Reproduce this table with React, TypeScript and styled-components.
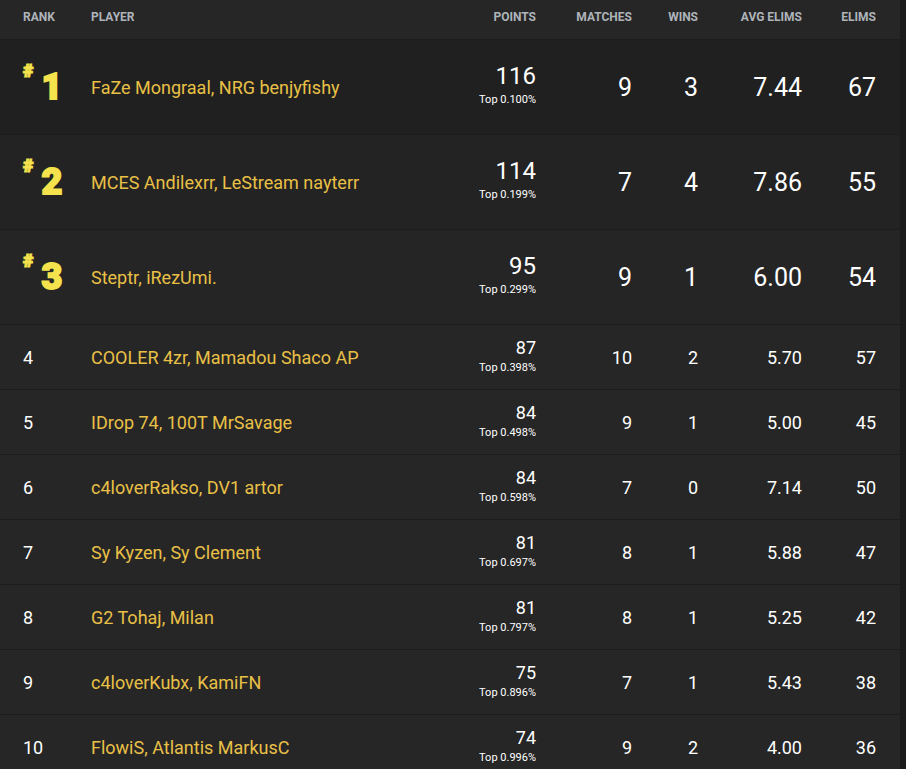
import styled, { createGlobalStyle } from 'styled-components';

const GlobalStyle = createGlobalStyle`
  html, body { margin: 0; padding: 0; background: #1b1b1b; }
  body { font-family: Roboto, "Noto Sans", "Liberation Sans", sans-serif; }
`;

type Row = {
  rank: number;
  player: string;
  points: number;
  top: string;
  matches: number;
  wins: number;
  avg: string;
  elims: number;
};

const rows: Row[] = [
  { rank: 1, player: 'FaZe Mongraal, NRG benjyfishy', points: 116, top: '0.100', matches: 9, wins: 3, avg: '7.44', elims: 67 },
  { rank: 2, player: 'MCES Andilexrr, LeStream nayterr', points: 114, top: '0.199', matches: 7, wins: 4, avg: '7.86', elims: 55 },
  { rank: 3, player: 'Steptr, iRezUmi.', points: 95, top: '0.299', matches: 9, wins: 1, avg: '6.00', elims: 54 },
  { rank: 4, player: 'COOLER 4zr, Mamadou Shaco AP', points: 87, top: '0.398', matches: 10, wins: 2, avg: '5.70', elims: 57 },
  { rank: 5, player: 'IDrop 74, 100T MrSavage', points: 84, top: '0.498', matches: 9, wins: 1, avg: '5.00', elims: 45 },
  { rank: 6, player: 'c4loverRakso, DV1 artor', points: 84, top: '0.598', matches: 7, wins: 0, avg: '7.14', elims: 50 },
  { rank: 7, player: 'Sy Kyzen, Sy Clement', points: 81, top: '0.697', matches: 8, wins: 1, avg: '5.88', elims: 47 },
  { rank: 8, player: 'G2 Tohaj, Milan', points: 81, top: '0.797', matches: 8, wins: 1, avg: '5.25', elims: 42 },
  { rank: 9, player: 'c4loverKubx, KamiFN', points: 75, top: '0.896', matches: 7, wins: 1, avg: '5.43', elims: 38 },
  { rank: 10, player: 'FlowiS, Atlantis MarkusC', points: 74, top: '0.996', matches: 9, wins: 2, avg: '4.00', elims: 36 },
];

const topShades = ['#202020', '#232323', '#252525'];

const Board = styled.div`
  width: 900px;
  background: #262626;
  color: #fff;
`;

const Line = styled.div<{ $h: number; $bg: string }>`
  display: grid;
  grid-template-columns: 68px 1fr 90px 96px 66px 104px 74px;
  align-items: center;
  height: ${(p) => p.$h}px;
  padding: 0 24px 0 23px;
  background: ${(p) => p.$bg};
  border-bottom: 1px solid #1c1c1c;
`;

const Head = styled.div<{ $right?: boolean }>`
  font-size: 12px;
  font-weight: 700;
  color: #aeb4ba;
  text-transform: uppercase;
  text-align: ${(p) => (p.$right ? 'right' : 'left')};
  margin-top: -6px;
`;

const RankPlain = styled.div`
  font-size: 18px;
  font-weight: 400;
  color: #fff;
`;

const RankBadge = styled.div`
  display: flex;
  align-items: flex-start;
  color: #f4e34c;
  font-weight: 900;
  margin-top: -4px;
`;

const Hash = styled.span`
  font-size: 18px;
  line-height: 16px;
  margin-right: 8px;
  margin-top: -3px;
  -webkit-text-stroke: 1px #f4e34c;
`;

const RankNum = styled.span`
  font-size: 36px;
  line-height: 34px;
  margin-top: 4px;
  -webkit-text-stroke: 1.8px #f4e34c;
`;

const Player = styled.div`
  font-size: 18px;
  color: #e9c046;
  white-space: nowrap;
`;

const PointsCell = styled.div<{ $big: boolean }>`
  display: flex;
  flex-direction: column;
  align-items: flex-end;
  margin-top: ${(p) => (p.$big ? '-7px' : '-2px')};
`;

const PointsNum = styled.span<{ $big: boolean }>`
  font-size: ${(p) => (p.$big ? 24 : 18)}px;
  line-height: ${(p) => (p.$big ? 28 : 20)}px;
`;

const TopPct = styled.span`
  font-size: 11px;
  font-weight: 400;
  margin-top: 3px;
`;

const Num = styled.div<{ $big: boolean }>`
  text-align: right;
  font-size: ${(p) => (p.$big ? 25 : 18)}px;
`;

export default function App() {
  return (
    <>
      <GlobalStyle />
      <Board>
        <Line $h={39} $bg="#262626">
          <Head>Rank</Head>
          <Head>Player</Head>
          <Head $right>Points</Head>
          <Head $right>Matches</Head>
          <Head $right>Wins</Head>
          <Head $right>Avg Elims</Head>
          <Head $right>Elims</Head>
        </Line>
        {rows.map((r) => {
          const big = r.rank <= 3;
          return (
            <Line key={r.rank} $h={big ? 94 : 64} $bg={big ? topShades[r.rank - 1] : '#262626'}>
              {big ? (
                <RankBadge>
                  <Hash>#</Hash>
                  <RankNum>{r.rank}</RankNum>
                </RankBadge>
              ) : (
                <RankPlain>{r.rank}</RankPlain>
              )}
              <Player>{r.player}</Player>
              <PointsCell $big={big}>
                <PointsNum $big={big}>{r.points}</PointsNum>
                <TopPct>Top {r.top}%</TopPct>
              </PointsCell>
              <Num $big={big}>{r.matches}</Num>
              <Num $big={big}>{r.wins}</Num>
              <Num $big={big}>{r.avg}</Num>
              <Num $big={big}>{r.elims}</Num>
            </Line>
          );
        })}
      </Board>
    </>
  );
}
